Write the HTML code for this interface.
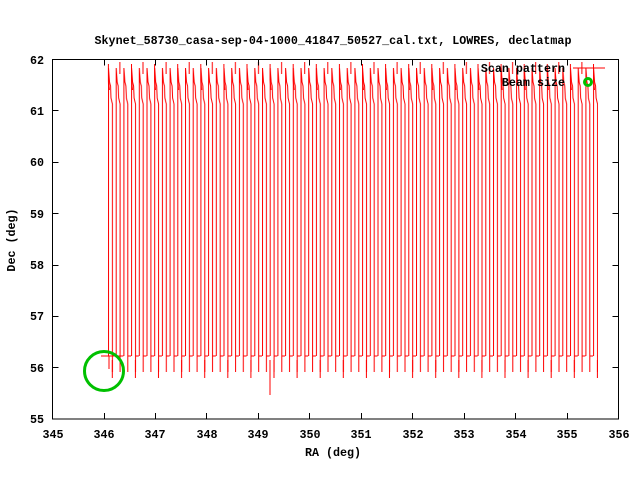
<!DOCTYPE html>
<html><head><style>
body{margin:0;background:#fff;width:640px;height:480px;overflow:hidden}
svg text{font-family:"Liberation Mono",monospace;font-size:11.7px;font-weight:bold;fill:#000}
</style></head><body>
<svg width="640" height="480" xmlns="http://www.w3.org/2000/svg">
<defs>
<pattern id="p" patternUnits="userSpaceOnUse" x="108" y="60" width="7.7" height="330">
<path d="M0.5 296 L0.5 8 L1.5 22 L2.5 26 L3 38 L4.4 44 L4.4 300 M4.4 296 L7.7 296 M4.4 300 L4.4 312" fill="none" stroke="#ff0000" stroke-width="1"/>
</pattern>
<pattern id="q" patternUnits="userSpaceOnUse" x="131" y="60" width="23.1" height="330">
<path d="M0.5 4 L0.5 20 L1.5 30 M4.4 300 L4.4 318 M12 2 L12 14" fill="none" stroke="#ff0000" stroke-width="1"/>
</pattern>
</defs>
<rect x="107" y="62" width="491" height="320" fill="url(#p)"/>
<rect x="107" y="62" width="491" height="320" fill="url(#q)"/>
<path d="M101 356 L120 356 M109 356 L109 369 M270 360 L270 395" stroke="#ff0000" fill="none"/>
<rect x="52.5" y="59.5" width="566" height="359.5" fill="none" stroke="#000" stroke-width="1"/>
<g stroke="#000" stroke-width="1">
<path d="M104.5 419V413M155.5 419V413M206.5 419V413M258.5 419V413M309.5 419V413M361.5 419V413M412.5 419V413M464.5 419V413M515.5 419V413M567.5 419V413"/>
<path d="M104.5 59.5V65.5M155.5 59.5V65.5M206.5 59.5V65.5M258.5 59.5V65.5M309.5 59.5V65.5M361.5 59.5V65.5M412.5 59.5V65.5M464.5 59.5V65.5M515.5 59.5V65.5M567.5 59.5V65.5"/>
<path d="M52.5 110.5H58.5M52.5 162.5H58.5M52.5 213.5H58.5M52.5 265.5H58.5M52.5 316.5H58.5M52.5 367.5H58.5"/>
<path d="M618.5 110.5H612.5M618.5 162.5H612.5M618.5 213.5H612.5M618.5 265.5H612.5M618.5 316.5H612.5M618.5 367.5H612.5"/>
</g>
<g text-anchor="middle">
<text x="53" y="438">345</text><text x="104" y="438">346</text><text x="155" y="438">347</text><text x="207" y="438">348</text><text x="258" y="438">349</text><text x="310" y="438">350</text><text x="361" y="438">351</text><text x="413" y="438">352</text><text x="464" y="438">353</text><text x="516" y="438">354</text><text x="567" y="438">355</text><text x="619" y="438">356</text>
</g>
<g text-anchor="end">
<text x="44" y="64">62</text><text x="44" y="115">61</text><text x="44" y="166">60</text><text x="44" y="218">59</text><text x="44" y="269">58</text><text x="44" y="320">57</text><text x="44" y="372">56</text><text x="44" y="423">55</text>
</g>
<text x="333" y="44" text-anchor="middle">Skynet_58730_casa-sep-04-1000_41847_50527_cal.txt, LOWRES, declatmap</text>
<text x="333" y="456" text-anchor="middle">RA (deg)</text>
<text transform="translate(15,240) rotate(-90)" text-anchor="middle">Dec (deg)</text>
<text x="565" y="72" text-anchor="end">Scan pattern</text>
<line x1="573" y1="68" x2="605" y2="68" stroke="#ff0000"/>
<text x="565" y="86" text-anchor="end">Beam size</text>
<circle cx="588" cy="82" r="3.5" fill="none" stroke="#00c000" stroke-width="3"/>
<circle cx="104" cy="371" r="19.5" fill="none" stroke="#00c000" stroke-width="3"/>
</svg>
</body></html>
